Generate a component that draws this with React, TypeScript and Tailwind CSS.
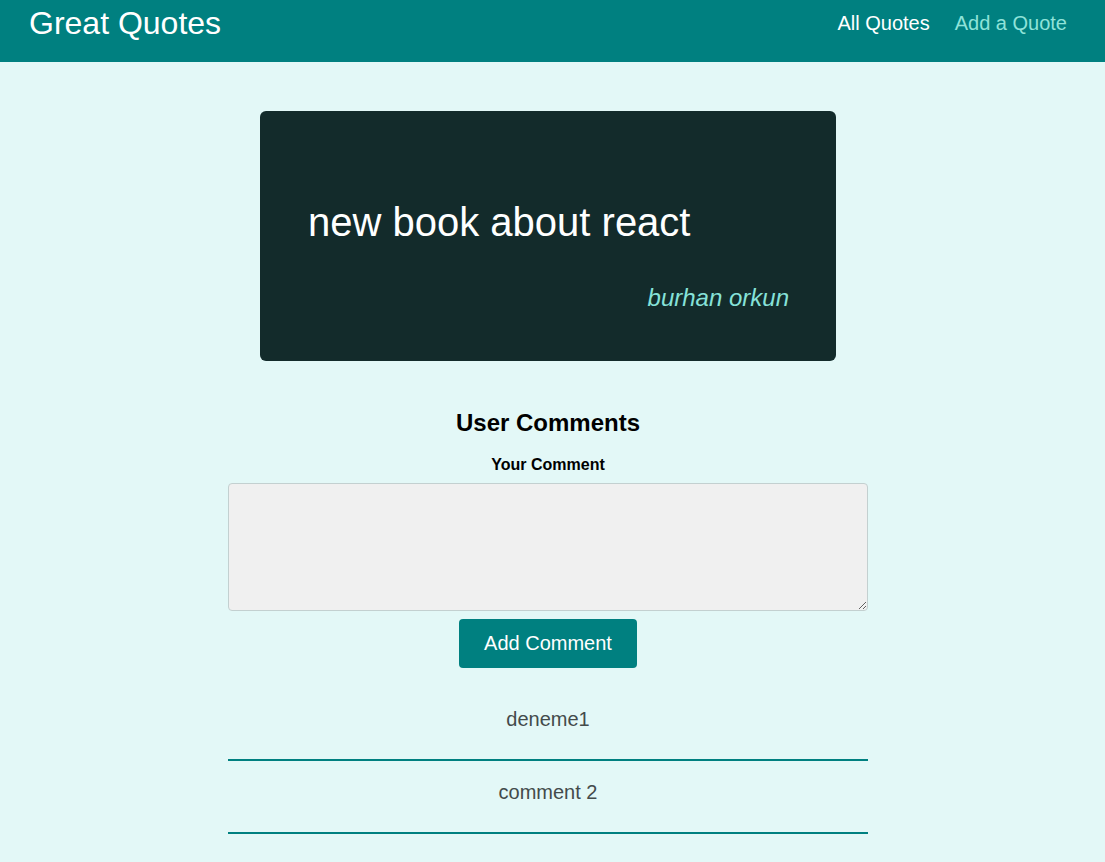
export default function App() {
  return (
    <div className="min-h-[862px] bg-[#e3f8f7] font-['Liberation_Sans',Arial,sans-serif]">
      <header className="h-[62px] bg-[#008080] flex items-start justify-between pl-[29px] pr-[38px]">
        <div className="text-white text-[32px] leading-[37px] pt-[5px]">Great Quotes</div>
        <nav className="flex gap-[25px] text-[20px] leading-[23px] pt-[12px]">
          <a className="text-white cursor-pointer">All Quotes</a>
          <a className="text-[#8fe3d9] cursor-pointer">Add a Quote</a>
        </nav>
      </header>
      <main className="flex flex-col items-center pr-[9px]">
        <figure className="mt-[49px] w-[576px] h-[250px] rounded-[6px] bg-[#132b2b] pt-[89px] pl-[48px] pr-[47px]">
          <p className="text-white text-[40px] leading-[44px]">new book about react</p>
          <figcaption className="mt-[40px] text-right italic text-[24px] leading-[28px] text-[#86e2d9]">
            burhan orkun
          </figcaption>
        </figure>
        <section className="mt-[48px] w-[640px] flex flex-col items-center">
          <h2 className="text-[24px] leading-[28px] font-bold text-black">User Comments</h2>
          <label className="mt-[19px] text-[16px] leading-[18px] font-bold text-black">Your Comment</label>
          <textarea className="mt-[9px] w-[640px] h-[128px] bg-[#f0f0f0] border border-[#c3d0d0] rounded-[4px] block" />
          <button className="mt-[8px] w-[178px] h-[49px] bg-[#008080] rounded-[4px] text-white text-[20px] leading-[23px]">
            Add Comment
          </button>
          <ul className="mt-[20px] w-[640px]">
            {["deneme1", "comment 2"].map((c) => (
              <li
                key={c}
                className="pt-[20px] pb-[28px] border-b-2 border-[#008080] text-center text-[20px] leading-[23px] text-[#434b4b]"
              >
                {c}
              </li>
            ))}
          </ul>
        </section>
      </main>
    </div>
  );
}
